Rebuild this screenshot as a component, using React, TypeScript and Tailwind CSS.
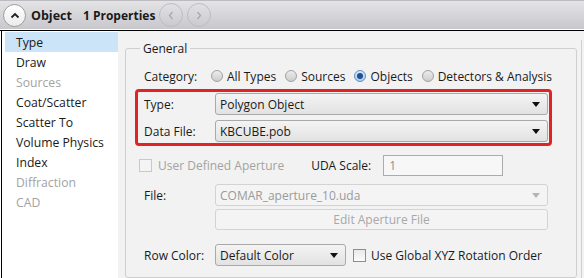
import type { ReactNode } from "react";

const navItems = [
  { label: "Type", active: true },
  { label: "Draw" },
  { label: "Sources", disabled: true },
  { label: "Coat/Scatter" },
  { label: "Scatter To" },
  { label: "Volume Physics" },
  { label: "Index" },
  { label: "Diffraction", disabled: true },
  { label: "CAD", disabled: true },
];

function Radio({ checked }: { checked?: boolean }) {
  if (checked) {
    return (
      <span className="flex h-[12px] w-[12px] shrink-0 items-center justify-center rounded-full border border-[#5d8fc4] bg-gradient-to-b from-[#d7e8f8] to-[#a9cbee]">
        <span className="h-[6px] w-[6px] rounded-full bg-[#1f4f8f]" />
      </span>
    );
  }
  return (
    <span className="h-[12px] w-[12px] shrink-0 rounded-full border border-[#a2a2a2] bg-gradient-to-b from-[#ececec] to-[#cdcdcd]" />
  );
}

function Checkbox({ disabled }: { disabled?: boolean }) {
  return (
    <span
      className={
        disabled
          ? "h-[13px] w-[13px] shrink-0 border border-[#c9c9c9] bg-[#f4f4f4]"
          : "h-[13px] w-[13px] shrink-0 border border-[#8e8e8e] bg-gradient-to-b from-[#e9e9e9] to-[#fbfbfb]"
      }
    />
  );
}

function Arrow({ muted }: { muted?: boolean }) {
  return (
    <svg width="8" height="5" viewBox="0 0 8 5" className="shrink-0">
      <path d="M0 0 H8 L4 5 Z" fill={muted ? "#b5b5b5" : "#111"} />
    </svg>
  );
}

function Select({
  value,
  disabled,
  className = "",
}: {
  value: string;
  disabled?: boolean;
  className?: string;
}) {
  return (
    <div
      className={
        (disabled
          ? "border-[#d3d3d3] bg-[#f4f4f4] text-[#9a9a9a] "
          : "border-[#a9a9a9] bg-gradient-to-b from-[#f4f4f4] to-[#e2e2e2] text-[#1a1a1a] ") +
        "flex h-[22px] items-center justify-between rounded-[3px] border pl-[4px] pr-[7px] " +
        className
      }
    >
      <span>{value}</span>
      <Arrow muted={disabled} />
    </div>
  );
}

function Row({ label, children }: { label: string; children: ReactNode }) {
  return (
    <div className="flex items-center">
      <span className="w-[71px] shrink-0">{label}</span>
      {children}
    </div>
  );
}

function CircleButton({ children, faint }: { children: ReactNode; faint?: boolean }) {
  return (
    <div
      className={
        faint
          ? "flex h-[24px] w-[24px] items-center justify-center rounded-full border border-[#bdbdc1]"
          : "flex h-[23px] w-[23px] items-center justify-center rounded-full border border-[#9d9d9d] bg-gradient-to-b from-white to-[#ececec]"
      }
    >
      {children}
    </div>
  );
}

export default function App() {
  return (
    <div className="h-[278px] w-[584px] overflow-hidden bg-white font-['Open_Sans','Noto_Sans',sans-serif] text-[12px] leading-[17px] text-[#1a1a1a]">
      {/* Header */}
      <div className="flex h-[29px] items-center gap-[4px] border-t border-[#bcbcc0] bg-gradient-to-b from-[#e4e4e7] to-[#c8c8cc] pl-[3px]">
        <CircleButton>
          <svg width="10" height="7" viewBox="0 0 10 7">
            <path d="M1.5 5.5 L5 2 L8.5 5.5" fill="none" stroke="#222" strokeWidth="1.8" />
          </svg>
        </CircleButton>
        <span className="ml-[1px] text-[12.5px] font-bold">Object</span>
        <span className="ml-[7px] text-[12px] font-bold">1 Properties</span>
        <div className="flex gap-[4px]">
          <CircleButton faint>
            <svg width="6" height="9" viewBox="0 0 6 9">
              <path d="M4.5 1 L1.5 4.5 L4.5 8" fill="none" stroke="#a9a9ad" strokeWidth="1.3" />
            </svg>
          </CircleButton>
          <CircleButton faint>
            <svg width="6" height="9" viewBox="0 0 6 9">
              <path d="M1.5 1 L4.5 4.5 L1.5 8" fill="none" stroke="#a9a9ad" strokeWidth="1.3" />
            </svg>
          </CircleButton>
        </div>
      </div>
      <div className="h-[1px] bg-white" />
      <div className="h-[1px] bg-black" />

      {/* Body */}
      <div className="ml-[1px] flex h-[247px] border-l border-black">
        {/* Left nav */}
        <div className="w-[116px] shrink-0 bg-white pl-[3px] pt-[1px]">
          {navItems.map((item) => (
            <div
              key={item.label}
              className={
                (item.active ? "bg-[#cce4f7] " : "") +
                (item.disabled ? "text-[#a3a3a3] " : "") +
                "flex h-[20px] items-center pl-[11px] text-[12.2px]"
              }
            >
              {item.label}
            </div>
          ))}
        </div>

        {/* Right panel */}
        <div className="flex flex-1 bg-[#f2f2f2] pl-[7px] pt-[9px]">
          <fieldset className="w-[451px] shrink-0 rounded-[3px] border border-[#cfcfcf] pl-[9px] pr-[24px]">
            <legend className="ml-[5px] px-[3px] text-[12px]">General</legend>

            {/* Category */}
            <div className="mt-[9px] flex h-[20px] items-center whitespace-nowrap pl-[9px]">
              <span className="w-[67px] shrink-0">Category:</span>
              <span className="flex items-center gap-[4px]">
                <Radio />
                All Types
              </span>
              <span className="ml-[9px] flex items-center gap-[4px]">
                <Radio />
                Sources
              </span>
              <span className="ml-[9px] flex items-center gap-[4px]">
                <Radio checked />
                Objects
              </span>
              <span className="ml-[9px] flex items-center gap-[4px]">
                <Radio />
                Detectors &amp; Analysis
              </span>
            </div>

            {/* Highlighted type selection */}
            <div className="mt-[3px] flex flex-col gap-[5px] rounded-[4px] border-[3px] border-[#e02424] py-[1px] pl-[6px] pr-[1px]">
              <Row label="Type:">
                <Select value="Polygon Object" className="flex-1" />
              </Row>
              <Row label="Data File:">
                <Select value="KBCUBE.pob" className="flex-1" />
              </Row>
            </div>

            <div className="pl-[9px] pr-[4px]">
              {/* Aperture */}
              <div className="mt-[9px] flex h-[21px] items-center whitespace-nowrap">
                <span className="-ml-[5px] flex items-center gap-[6px] text-[#a3a3a3]">
                  <Checkbox disabled />
                  User Defined Aperture
                </span>
                <span className="ml-[27px] w-[72px] shrink-0">UDA Scale:</span>
                <div className="flex h-[21px] w-[120px] items-center border border-[#acacac] bg-[#f7f7f7] pl-[5px] text-[#8f8f8f]">
                  1
                </div>
              </div>

              <div className="mt-[8px]">
                <Row label="File:">
                  <Select value="COMAR_aperture_10.uda" disabled className="h-[21px] flex-1" />
                </Row>
              </div>
              <div className="ml-[71px] mt-[3px] flex h-[21px] items-center justify-center rounded-[3px] border border-[#d3d3d3] bg-[#f4f4f4] text-[#a8a8a8]">
                Edit Aperture File
              </div>

              <div className="mt-[14px] flex items-center">
                <span className="w-[71px] shrink-0">Row Color:</span>
                <Select value="Default Color" className="w-[131px]" />
                <span className="ml-[7px] flex items-center gap-[5px] whitespace-nowrap">
                  <Checkbox />
                  Use Global XYZ Rotation Order
                </span>
              </div>
            </div>
          </fieldset>
          <div className="ml-[4px] w-[4px] border-l border-[#d0d0d0]" />
        </div>
      </div>
    </div>
  );
}
